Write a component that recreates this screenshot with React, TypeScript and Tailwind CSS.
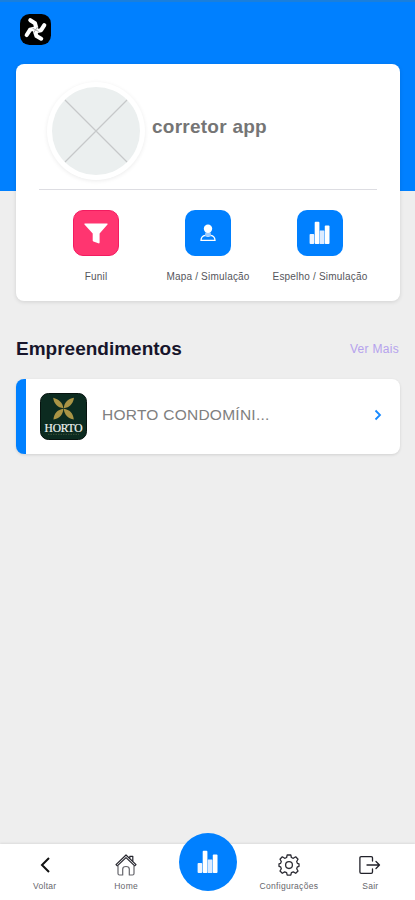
import type { ReactNode } from 'react';

const BarsIcon = () => (
  <svg width="22" height="24" viewBox="0 0 22 24" fill="#fff">
    <rect x="0.600" y="13" width="4.600" height="10" rx="0.900" fill="#eef5ff" />
    <rect x="5.700" y="0.800" width="4.700" height="22.200" rx="0.900" />
    <rect x="10.700" y="9.500" width="4.700" height="13.500" rx="0.500" fill="#dcebff" />
    <rect x="15.800" y="4.600" width="4.700" height="18.400" rx="0.900" />
  </svg>
);

const FunnelIcon = () => (
  <svg width="24" height="21" viewBox="0 0 24 21" fill="#fff">
    <path d="M1 0.400h22c.6 0 .8.700.5 1.200L15.600 10.500v9c0 .8-.7 1.100-1.300.8l-4.900-1.800c-.5-.2-.7-.5-.7-.9v-7.100L.5 1.600C.1 1.100.4.400 1 .400z" />
  </svg>
);

const PersonIcon = () => (
  <svg width="16" height="18" viewBox="0 0 16 18" fill="none">
    <path d="M1 16.300c.2-2.900 1.600-4.500 4.300-4.900l2.700.9 2.700-.9c2.700.4 4.100 2 4.300 4.900z" stroke="#fff" strokeWidth="1.300" />
    <path d="M5.300 8.500h5.400l.4 3.200-3.100 1-3.100-1z" fill="#9fcdff" />
    <circle cx="8" cy="4.700" r="4.200" fill="#fff" />
  </svg>
);

const HomeIcon = () => (
  <svg width="22" height="22" viewBox="0 0 22 22" fill="none" stroke="#25252d" strokeWidth="1.200" strokeLinejoin="round">
    <path d="M1 10.600 11 1l10 9.600-1.300 1.300L11 3.600l-8.700 8.300z" />
    <path d="M14.800 4.300V2.300h3v5" />
    <path d="M3 11.500v8c0 1 .6 1.500 1.500 1.500h3.200v-6c0-1.500 1.200-2.500 3.300-2.500s3.300 1 3.300 2.500v6h3.200c.9 0 1.500-.5 1.500-1.500v-8" stroke="#66666c" />
  </svg>
);

const GearIcon = () => (
  <svg width="22" height="22" viewBox="0 0 22 22" fill="none" stroke="#2c2c34" strokeWidth="1.300" strokeLinejoin="round">
    <path d="M9.200 1h3.600l.6 2.500 1.900.8 2.400-1.500L20 5.200l-1.300 2.300.7 1.900 1.600.5v2.400l-1.600.5-.7 1.900 1.300 2.300-2.300 2.300-2.400-1.400-1.900.8-.6 2.400H9.200l-.6-2.400-1.900-.8-2.400 1.400L2 17l1.300-2.300-.7-1.900-1.600-.5V9.900l1.600-.5.7-1.900L2 5.200l2.300-2.400 2.400 1.500 1.900-.8z" />
    <circle cx="11" cy="11.100" r="3.400" />
  </svg>
);

const ExitIcon = () => (
  <svg width="22" height="18" viewBox="0 0 22 18" fill="none" stroke="#22222a" strokeWidth="1.300" strokeLinecap="round" strokeLinejoin="round">
    <path d="M13.500 5V2c0-.8-.5-1.300-1.300-1.300H2.200C1.400.7.900 1.200.900 2v14c0 .8.5 1.300 1.300 1.300h10c.8 0 1.300-.5 1.300-1.300v-3" />
    <path d="M8 9h12.500M17 5.500 20.500 9 17 12.500" />
  </svg>
);

const BackIcon = () => (
  <svg width="10" height="16" viewBox="0 0 10 16" fill="none" stroke="#111" strokeWidth="2">
    <path d="M9 1 2 8l7 7" />
  </svg>
);

const BrandLogo = () => (
  <svg width="31" height="31" viewBox="0 0 31 31">
    <rect width="31" height="31" rx="9.500" fill="#000" />
    <g fill="none" stroke="#fff" strokeWidth="4.100" strokeLinecap="round" strokeLinejoin="round">
      <path d="M10.300 6.200l4.700 3 1.200 4.300" />
      <path d="M24.300 11.200l-3.200 5-4 .800" />
      <path d="M21.200 24.700l-4.700-2.700-1.500-4.500" />
      <path d="M6.700 21l3.300-5.200 4-1" />
    </g>
    <path d="M12.500 14.200l3 1.600M17.700 12.800l-2.200 3M18.700 17.500l-3.200-1.700M13.700 18.800l1.800-3" stroke="#888" strokeWidth="0.700" />
  </svg>
);

const HortoLogo = () => (
  <svg width="47" height="47" viewBox="0 0 47 47">
    <rect x="0.500" y="0.500" width="46" height="46" rx="8" fill="#0c2b20" stroke="#07130f" />
    <g fill="#aa9445">
      <path d="M23.400 15.300C17.500 14.500 14 11 13.200 4.800c5.600 1.500 9.400 4.700 10.200 10.500z" />
      <path d="M23.800 15.300c.3-5.800 4-9.300 10.200-10.500-1 6.200-4.500 9.700-10.200 10.500z" />
      <path d="M23.400 15.700c-.4 6-3.800 9.600-10 10.700.7-6.200 4.200-9.900 10-10.700z" />
      <path d="M23.800 15.700c5.800.8 9.300 4.500 10 10.700-6-1.100-9.500-4.700-10-10.700z" />
    </g>
    <text x="23.500" y="38.700" textAnchor="middle" textLength="38" fontSize="11.500" fontFamily="Liberation Serif, serif" fill="#f1f4f0" stroke="#f1f4f0" strokeWidth="0.200">HORTO</text>
    <path d="M8 41.300h31" stroke="#485a3d" strokeWidth="0.800" strokeDasharray="1.500 1" />
  </svg>
);

const Shortcut = ({ label, tile, children }: { label: string; tile: string; children: ReactNode }) => (
  <button className="flex w-28 flex-col items-center">
    <span className={`flex h-[46px] w-[46px] items-center justify-center rounded-[10px] ${tile}`}>{children}</span>
    <span className="mt-[15px] text-[10px] leading-3 tracking-[0.2px] whitespace-nowrap text-[#55555b]">{label}</span>
  </button>
);

const NavItem = ({ label, children }: { label: string; children: ReactNode }) => (
  <button className="flex flex-1 flex-col items-center pt-[9px]">
    <span className="flex h-6 items-center justify-center">{children}</span>
    <span className="mt-1 text-[8.5px] leading-[10px] tracking-[0.3px] whitespace-nowrap text-[#66666c]">{label}</span>
  </button>
);

const App = () => {
  return (
    <div className="flex h-[900px] w-full flex-col overflow-hidden bg-[#eeeeee] font-['Liberation_Sans',Arial,sans-serif]">
      <header className="h-[190.5px] shrink-0 border-t-2 border-[#1a7fdc] bg-[#0080ff] px-5 pt-3">
        <BrandLogo />
      </header>

      <main className="relative -mt-[126.500px] flex-1 px-4">
        <section className="mr-[-1px] h-[237px] rounded-lg bg-white px-[23px] shadow-[0_1px_4px_rgba(0,0,0,0.12)]">
          <div className="flex h-[126px] items-center border-b border-[#dddde2] pl-2 pt-2">
            <div className="flex h-[98px] w-[98px] items-center justify-center rounded-full bg-white shadow-[0_1px_4px_rgba(0,0,0,0.08)]">
              <svg width="88" height="88" viewBox="0 0 88 88">
                <circle cx="44" cy="44" r="44" fill="#ebefef" />
                <path d="M13 13l62 62M75 13 13 75" stroke="#c6c8c9" strokeWidth="1.200" />
              </svg>
            </div>
            <h1 className="mb-1.5 ml-[7px] text-[19px] font-bold tracking-[0.25px] text-[#757575]">corretor app</h1>
          </div>
          <div className="flex justify-center pt-5">
            <Shortcut label="Funil" tile="bg-[#ff3570] border border-[#f31b60]">
              <FunnelIcon />
            </Shortcut>
            <Shortcut label="Mapa / Simulação" tile="bg-[#0080ff]">
              <PersonIcon />
            </Shortcut>
            <Shortcut label="Espelho / Simulação" tile="bg-[#0080ff]">
              <BarsIcon />
            </Shortcut>
          </div>
        </section>

        <div className="flex items-center justify-between pt-9">
          <h2 className="text-[19px] leading-6 font-bold text-[#17152b]">Empreendimentos</h2>
          <a className="text-xs tracking-[0.3px] text-[#b5a2ed]">Ver Mais</a>
        </div>

        <button className="mt-[18px] -mr-px flex h-[75px] w-[384px] items-center rounded-lg border-l-[10px] border-[#0080ff] bg-white pr-[18px] pl-[14px] text-left shadow-[0_1px_3px_rgba(0,0,0,0.12)]">
          <HortoLogo />
          <span className="mb-[3px] ml-[15px] flex-1 text-[15.5px] tracking-[0.25px] text-[#808080]">HORTO CONDOMÍNI...</span>
          <svg className="mb-[3px]" width="8" height="12" viewBox="0 0 8 12" fill="none" stroke="#1689ff" strokeWidth="1.800">
            <path d="M1.500 1.500 6 6l-4.500 4.500" />
          </svg>
        </button>
      </main>

      <nav className="relative flex h-14 shrink-0 bg-white px-1 shadow-[0_-1px_2px_rgba(0,0,0,0.08)]">
        <NavItem label="Voltar">
          <BackIcon />
        </NavItem>
        <NavItem label="Home">
          <HomeIcon />
        </NavItem>
        <div className="flex flex-1 justify-center">
          <button className="-mt-[11px] flex h-[58px] w-[58px] items-center justify-center rounded-full bg-[#0080ff]">
            <BarsIcon />
          </button>
        </div>
        <NavItem label="Configurações">
          <GearIcon />
        </NavItem>
        <NavItem label="Sair">
          <ExitIcon />
        </NavItem>
      </nav>
    </div>
  );
};

export default App;
